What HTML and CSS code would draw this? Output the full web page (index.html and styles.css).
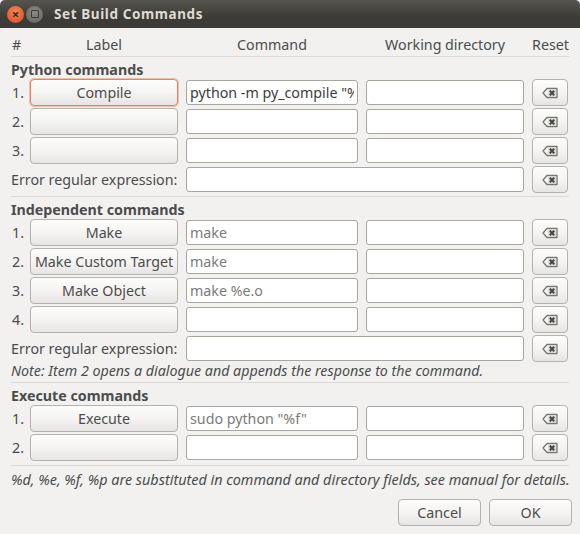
FILE: index.html
```html
<!DOCTYPE html>
<html lang="en">
<head>
    <meta charset="UTF-8">
    <meta name="viewport" content="width=device-width, initial-scale=1.0">
    <title>Set Build Commands</title>
    <link rel="stylesheet" href="styles.css">
</head>
<body>
    <svg class="sprite" width="0" height="0">
        <symbol id="clear" viewBox="0 0 16 12">
            <path d="M5 1.5H15V10.5H5L1 6Z" fill="none" stroke="#77776f" stroke-width="1.3" stroke-linejoin="round"/>
            <rect x="6" y="2.5" width="8" height="7" fill="#dcdcd9"/>
            <path d="M7.8 3.8L12.2 8.2M12.2 3.8L7.8 8.2" stroke="#454543" stroke-width="2"/>
        </symbol>
    </svg>

    <div class="titlebar">
        <span class="wm-btn wm-close">×</span>
        <span class="wm-btn wm-max"><i></i></span>
        <span class="wm-title">Set Build Commands</span>
    </div>

    <main class="dialog">
        <div class="grid">
            <div class="head hash">#</div>
            <div class="head">Label</div>
            <div class="head">Command</div>
            <div class="head">Working directory</div>
            <div class="head">Reset</div>
            <hr class="sep sep-head">

            <div class="section">Python commands</div>
            <div class="num">1.</div>
            <button class="btn btn-focus">Compile</button>
            <input class="field" value='python -m py_compile "%f"'>
            <input class="field">
            <button class="btn btn-clear"><svg><use href="#clear"/></svg></button>
            <div class="num">2.</div>
            <button class="btn"></button>
            <input class="field">
            <input class="field">
            <button class="btn btn-clear"><svg><use href="#clear"/></svg></button>
            <div class="num">3.</div>
            <button class="btn"></button>
            <input class="field">
            <input class="field">
            <button class="btn btn-clear"><svg><use href="#clear"/></svg></button>
            <div class="err">Error regular expression:</div>
            <input class="field">
            <button class="btn btn-clear"><svg><use href="#clear"/></svg></button>
            <hr class="sep">

            <div class="section">Independent commands</div>
            <div class="num">1.</div>
            <button class="btn">Make</button>
            <input class="field field-dim" value="make">
            <input class="field">
            <button class="btn btn-clear"><svg><use href="#clear"/></svg></button>
            <div class="num">2.</div>
            <button class="btn">Make Custom Target</button>
            <input class="field field-dim" value="make">
            <input class="field">
            <button class="btn btn-clear"><svg><use href="#clear"/></svg></button>
            <div class="num">3.</div>
            <button class="btn">Make Object</button>
            <input class="field field-dim" value="make %e.o">
            <input class="field">
            <button class="btn btn-clear"><svg><use href="#clear"/></svg></button>
            <div class="num">4.</div>
            <button class="btn"></button>
            <input class="field">
            <input class="field">
            <button class="btn btn-clear"><svg><use href="#clear"/></svg></button>
            <div class="err">Error regular expression:</div>
            <input class="field">
            <button class="btn btn-clear"><svg><use href="#clear"/></svg></button>
            <div class="note">Note: Item 2 opens a dialogue and appends the response to the command.</div>
            <hr class="sep">

            <div class="section">Execute commands</div>
            <div class="num">1.</div>
            <button class="btn">Execute</button>
            <input class="field field-dim" value='sudo python "%f"'>
            <input class="field">
            <button class="btn btn-clear"><svg><use href="#clear"/></svg></button>
            <div class="num">2.</div>
            <button class="btn"></button>
            <input class="field">
            <input class="field">
            <button class="btn btn-clear"><svg><use href="#clear"/></svg></button>
            <hr class="sep sep-exec">
            <div class="note note-last">%d, %e, %f, %p are substituted in command and directory fields, see manual for details.</div>
        </div>

        <div class="actions">
            <button class="btn btn-action">Cancel</button>
            <button class="btn btn-action">OK</button>
        </div>
    </main>
</body>
</html>
```

FILE: styles.css
```css
html, body {
    margin: 0;
    height: 100%;
}

body {
    width: 580px;
    height: 534px;
    overflow: hidden;
    background-color: #f2f1f0;
    color: #4c4c4c;
    font-family: "Noto Sans", sans-serif;
    font-size: 14.25px;
}

.sprite {
    position: absolute;
}

.titlebar {
    display: flex;
    align-items: center;
    height: 28px;
    padding-left: 7px;
    background: linear-gradient(#56544e, #3c3b37 60%);
    border-radius: 5px 5px 0 0;
}

.wm-btn {
    display: flex;
    align-items: center;
    justify-content: center;
    width: 17px;
    height: 17px;
    border-radius: 50%;
}

.wm-close {
    background: radial-gradient(circle at 50% 35%, #f5875a, #d9481c);
    color: #3c2a20;
    font-size: 13px;
    font-weight: 700;
    line-height: 1;
}

.wm-max {
    margin-left: 2px;
    background: radial-gradient(circle at 50% 35%, #8b8a85, #63625d);
}

.wm-max i {
    width: 6px;
    height: 6px;
    border: 1px solid #3d3c38;
    border-radius: 1px;
}

.wm-title {
    margin-left: 11px;
    color: #dfdbd2;
    font-size: 13.5px;
    font-weight: 700;
    letter-spacing: 0.6px;
}

.dialog {
    padding: 0 11px;
}

.grid {
    display: grid;
    grid-template-columns: 11px 148px 172px 158px 37px;
    column-gap: 8px;
    align-items: center;
}

.head {
    grid-row: 1;
    height: 27px;
    line-height: 34px;
    text-align: center;
    white-space: nowrap;
}

.hash {
    margin-left: 1px;
    text-align: left;
}

.sep {
    grid-column: 1 / -1;
    width: 100%;
    height: 1px;
    margin: 2px 0 0;
    border: 0;
    background-color: #dcdad6;
}

.sep-head {
    margin-top: 1px;
}

.sep-exec {
    margin-top: 3px;
}

.section {
    grid-column: 1 / -1;
    height: 21px;
    font-weight: 700;
    line-height: 25px;
}

.num {
    height: 29px;
    padding-left: 1px;
    line-height: 29px;
    white-space: nowrap;
}

.err {
    grid-column: 1 / 3;
    height: 29px;
    line-height: 29px;
    white-space: nowrap;
}

.err + .field {
    grid-column: 3 / 5;
}

.btn {
    width: 100%;
    height: 27px;
    padding: 0;
    border: 1px solid #b5b2ac;
    border-radius: 4px;
    background: linear-gradient(#fcfcfb, #f5f4f3 50%, #e6e5e3);
    color: #4c4c4c;
    font: inherit;
    white-space: nowrap;
}

.btn-focus {
    border-color: #e8825a;
    box-shadow: 0 0 0 1px rgba(232, 130, 90, 0.45);
}

.btn-clear {
    display: flex;
    align-items: center;
    justify-content: center;
    width: 36px;
}

.btn-clear svg {
    width: 16px;
    height: 12px;
}

.field {
    width: 100%;
    height: 25px;
    box-sizing: border-box;
    padding: 0 3px;
    border: 1px solid #a9a6a0;
    border-radius: 3px;
    background-color: #fff;
    color: #3c3c3c;
    font: inherit;
}

.field-dim {
    color: #7b7b79;
}

.note {
    grid-column: 1 / -1;
    height: 17px;
    font-style: italic;
    line-height: 15px;
    white-space: nowrap;
}

.note-last {
    height: 33px;
    font-size: 14.38px;
    line-height: 27px;
}

.actions {
    display: flex;
    justify-content: flex-end;
    gap: 8px;
    margin-right: -3px;
}

.btn-action {
    width: 83px;
}
```
